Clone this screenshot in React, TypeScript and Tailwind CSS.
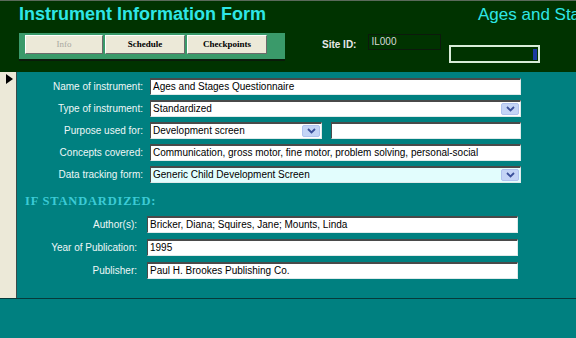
import React from 'react';

const sans = { fontFamily: '"Liberation Sans", Arial, sans-serif' };
const serif = { fontFamily: '"Liberation Serif", "Times New Roman", serif' };

const boxClass =
  'relative h-[17px] border border-t-2 border-t-[#4a4a4a] border-l-[#4a4a4a] border-r-[#dfeaea] border-b-[#dfeaea] text-[10px] leading-[13px] text-black pl-[2px] whitespace-nowrap overflow-hidden';

const Chevron: React.FC = () => (
  <span className="absolute right-[1px] top-[1px] w-[18px] h-[12px] rounded-[2px] bg-[#c4d4f6] border border-[#b0c2ee] flex items-center justify-center">
    <svg width="9" height="6" viewBox="0 0 9 6">
      <path d="M1 1 L4.5 4.5 L8 1" fill="none" stroke="#3a4f9a" strokeWidth="1.8" />
    </svg>
  </span>
);

const Field: React.FC<{ value?: string; combo?: boolean; tint?: boolean; className?: string }> = ({
  value = '',
  combo,
  tint,
  className = '',
}) => (
  <div className={`${boxClass} ${tint ? 'bg-[#e2fdfd]' : 'bg-white'} ${className}`} style={sans}>
    {value}
    {combo && <Chevron />}
  </div>
);

const Label: React.FC<{ children: React.ReactNode }> = ({ children }) => (
  <div className="h-[17px] flex items-center justify-end text-[10px] text-[#eef7f7] whitespace-nowrap" style={sans}>
    {children}
  </div>
);

const TabButton: React.FC<{ label: string; disabled?: boolean; width: string }> = ({ label, disabled, width }) => (
  <button
    className={`${width} h-[19px] bg-[#ece9d8] border border-t-[#ffffff] border-l-[#ffffff] border-r-[#6a6a6a] border-b-[#6a6a6a] text-[9px] font-bold ${
      disabled ? 'text-[#a8a8a0] font-normal' : 'text-black'
    }`}
    style={serif}
  >
    {label}
  </button>
);

export default function App() {
  return (
    <div className="w-[576px] h-[338px] overflow-hidden bg-[#008080] flex flex-col" style={sans}>
      {/* header */}
      <div className="h-[72px] shrink-0 bg-[#003300] border-t border-[#5a6a5a] flex">
        <div className="w-[300px] shrink-0 pl-[19px] pt-[2px]">
          <div className="text-[18px] leading-[22px] font-bold text-[#2ee6e6] whitespace-nowrap" style={sans}>
            Instrument Information Form
          </div>
          <div className="mt-[8px] w-[266px] h-[28px] bg-[#3a9a6a] border-b-2 border-[#0a1a0a] pl-[6px] pt-[2px] flex gap-[2px]">
            <TabButton label="Info" disabled width="w-[78px]" />
            <TabButton label="Schedule" width="w-[80px]" />
            <TabButton label="Checkpoints" width="w-[80px]" />
          </div>
        </div>
        <div className="flex-1 min-w-0 overflow-hidden">
          <div className="pl-[178px] pt-[3px] text-[17px] leading-[22px] text-[#2ee6e6] whitespace-nowrap overflow-hidden" style={sans}>
            Ages and Stages Questionnaire
          </div>
          <div className="mt-[8px] flex items-start">
            <div className="ml-[22px] mt-[3px] text-[10px] font-bold text-[#e8e8e8] whitespace-nowrap">Site ID:</div>
            <div className="ml-[12px] w-[73px] h-[16px] border border-[#0c1a0c] text-[10px] leading-[13px] text-[#d8d8d8] pl-[2px]">
              IL000
            </div>
            <div className="ml-[8px] mt-[11px] w-[91px] h-[18px] border-2 border-[#d8ecd8] flex justify-end items-center pr-[1px]">
              <div className="w-[4px] h-[11px] bg-[#1a3aa0]" />
            </div>
          </div>
        </div>
      </div>

      {/* detail section */}
      <div className="h-[227px] shrink-0 flex border-b border-[#063a3a]">
        <div className="w-[17px] shrink-0 bg-[#ece9d8] border-r border-[#3a4a4a] pt-[2px] pl-[6px]">
          <svg width="7" height="10" viewBox="0 0 7 10">
            <path d="M0 0 L7 5 L0 10 Z" fill="#000" />
          </svg>
        </div>
        <div className="flex-1 pt-[6px]">
          <div className="grid grid-cols-[126px_371px] gap-x-[7px] gap-y-[5px]">
            <Label>Name of instrument:</Label>
            <Field value="Ages and Stages Questionnaire" />
            <Label>Type of instrument:</Label>
            <Field value="Standardized" combo />
            <Label>Purpose used for:</Label>
            <div className="flex gap-[9px]">
              <Field value="Development screen" combo className="w-[172px]" />
              <Field className="flex-1" />
            </div>
            <Label>Concepts covered:</Label>
            <Field value="Communication, gross motor, fine motor, problem solving, personal-social" />
            <Label>Data tracking form:</Label>
            <Field value="Generic Child Development Screen" combo tint />
          </div>

          <div
            className="mt-[11px] ml-[8px] text-[12.5px] leading-[15px] font-bold tracking-[0.8px] text-[#3ccbd6] whitespace-nowrap"
            style={serif}
          >
            IF STANDARDIZED:
          </div>

          <div className="mt-[7px] grid grid-cols-[120px_371px] gap-x-[10px] gap-y-[6px]">
            <Label>Author(s):</Label>
            <Field value="Bricker, Diana; Squires, Jane; Mounts, Linda" />
            <Label>Year of Publication:</Label>
            <Field value="1995" />
            <Label>Publisher:</Label>
            <Field value="Paul H. Brookes Publishing Co." />
          </div>
        </div>
      </div>

      {/* footer */}
      <div className="flex-1 bg-[#008080]" />
    </div>
  );
}
